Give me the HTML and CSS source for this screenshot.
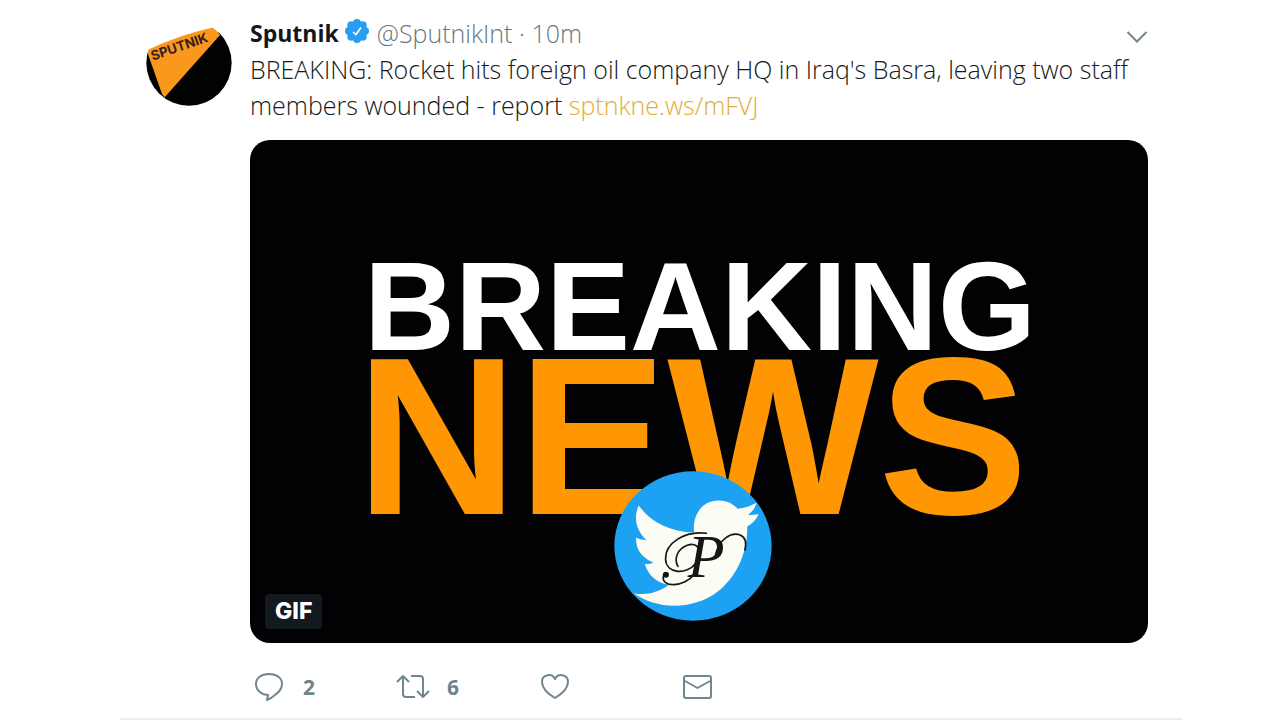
FILE: index.html
```html
<!DOCTYPE html>
<html lang="en">
<head>
<meta charset="utf-8">
<title>Sputnik on Twitter</title>
<link rel="stylesheet" href="styles.css">
</head>
<body>
<main class="page">
<article class="tweet">
  <svg class="avatar" viewBox="0 0 258 258" role="img" aria-label="Sputnik avatar">
    <defs><clipPath id="disc"><circle cx="129" cy="129" r="128"/></clipPath></defs>
    <g clip-path="url(#disc)">
      <path d="M0 95 L0 258 H258 V30 L222 36 Z" fill="#020203"/>
      <path d="M2 91 Q100 45 204 22 L222 45 L56 232 L48 222 Z" fill="#f9981d"/>
    </g>
    <text class="avatar-name" x="20" y="122" transform="rotate(-19 20 122)">SPUTNIK</text>
  </svg>
  <div class="content">
    <header class="head">
      <strong class="name">Sputnik</strong>
      <svg class="verified" viewBox="0 0 24 24" role="img" aria-label="Verified">
        <g fill="#2a9df0"><circle cx="12" cy="12" r="9"/><circle cx="12" cy="4" r="4"/><circle cx="17.700" cy="6.300" r="4"/><circle cx="20" cy="12" r="4"/><circle cx="17.700" cy="17.700" r="4"/><circle cx="12" cy="20" r="4"/><circle cx="6.300" cy="17.700" r="4"/><circle cx="4" cy="12" r="4"/><circle cx="6.300" cy="6.300" r="4"/></g>
        <path d="M8 13 L11 15.500 L16 8.500" fill="none" stroke="#fff" stroke-width="1.600"/>
      </svg>
      <span class="meta">@SputnikInt · 10m</span>
      <button class="more" aria-label="More"><svg viewBox="0 0 22 14"><path d="M1.500 2 L11 11.500 L20.500 2"/></svg></button>
    </header>
    <p class="text">BREAKING: Rocket hits foreign oil company HQ in Iraq's Basra, leaving two staff members wounded - report <a href="#">sptnkne.ws/mFVJ</a></p>
    <section class="media">
      <div class="breaking">BREAKING</div>
      <div class="news">NEWS</div>
      <svg class="logo" viewBox="42 36 472 448" role="img" aria-label="Bird logo">
        <ellipse cx="278" cy="260" rx="235" ry="223" fill="#1da1f2"/>
        <path fill="#fbfdf4" d="M116 139 C150 188 207 217 281 220 C276 165 306 124 354 124 C378 124 397 132 411 149 C432 147 452 140 468 131 C464 147 454 158 442 168 L474 165 C466 182 455 193 440 202 C442 294 393 387 305 423 C230 452 154 438 102 402 C142 408 176 398 207 376 C173 372 143 348 134 313 Q146 316 160 309 C125 296 106 269 108 235 Q122 242 139 242 C109 216 99 175 116 139Z"/>
        <text class="logo-letter" x="262" y="352">P</text>
        <g class="swash">
          <path d="M190 348 C180 387 254 383 281 345"/>
          <path d="M318 222 C254 213 194 252 196 299 C198 345 260 346 285 313 C313 278 292 246 261 258 C234 268 219 296 233 321"/>
          <path d="M345 287 C356 239 391 218 419 227 C436 234 438 251 433 272"/>
        </g>
        <circle cx="197" cy="346" r="9" fill="#111"/>
      </svg>
      <span class="gif">GIF</span>
    </section>
    <footer class="actions">
      <button class="action"><svg class="icon" viewBox="0 0 32 30"><path d="M15 23 C7 23 2 18 2 12 C2 6 7 2 15 2 C23 2 28 6 28 12 C28 19 22 22 17 26 L13 28 L14 23"/></svg><span>2</span></button>
      <button class="action"><svg class="icon wide" viewBox="0 0 34 30"><path d="M1 10 L7 4 L13 10 M7 5 V22 Q7 25 10 25 H19 M15 4 H24 Q27 4 27 7 V24 M21 19 L27 25 L33 19"/></svg><span>6</span></button>
      <button class="action" aria-label="Like"><svg class="icon" viewBox="0 0 32 30"><path d="M17 26 C12 23 4 17 4 10 C4 2 14 1 17 7 C20 1 30 2 30 10 C30 17 22 23 17 26Z"/></svg></button>
      <button class="action" aria-label="Message"><svg class="icon" viewBox="0 0 32 30"><rect x="4" y="4" width="27" height="22" rx="2"/><path d="M5 9 L17.500 16 L30 9"/></svg></button>
    </footer>
  </div>
</article>
</main>
</body>
</html>
```
FILE: styles.css
```css
* { box-sizing: border-box; }
body { margin: 0; background: #fff; color: #14191c; font-family: "Open Sans", "Noto Sans", sans-serif; }
.page { padding: 0 98px 0 120px; }
.tweet { display: flex; gap: 18px; padding: 15px 34px 0 26px; border-bottom: 2px solid #e9edf0; }
.avatar { flex: none; width: 86px; height: 86px; margin-top: 5px; }
.avatar-name { font: 700 40px "Inter", sans-serif; fill: #3a1d1d; }
.content { flex: 1; min-width: 0; }
.head { display: flex; align-items: center; height: 36px; line-height: 36px; }
.name { color: #14171a; font-size: 23px; font-weight: 700; }
.verified { width: 24px; height: 24px; margin: 0 8px 4px 6px; }
.meta { color: #66787f; font-size: 25px; font-weight: 300; }
button { margin: 0; padding: 0; border: 0; background: none; color: inherit; font: inherit; cursor: pointer; }
.more { margin-left: auto; display: flex; padding-top: 8px; }
.more svg { width: 22px; height: 14px; fill: none; stroke: #71868b; stroke-width: 2; }
.text { margin: 0 0 17px; font-size: 25px; line-height: 36px; font-weight: 300; }
.text a { color: #e0ae35; text-decoration: none; }
.media { position: relative; aspect-ratio: 898 / 503; padding-top: 118px; border-radius: 20px; background: #020204; overflow: hidden; font-family: "Liberation Sans", sans-serif; font-weight: 700; white-space: nowrap; }
.breaking { padding-left: 114px; color: #fff; font-size: 126px; line-height: 98px; }
.news { padding-left: 106px; color: #ff9604; font-size: 224px; line-height: 161px; }
.logo { position: absolute; left: 364px; bottom: 22px; width: 158px; height: 150px; }
.logo-letter { font: italic 180px "Liberation Serif", serif; fill: #161616; }
.swash { fill: none; stroke: #161616; stroke-width: 5; stroke-linecap: round; }
.gif { position: absolute; left: 15px; bottom: 14px; padding: 0 10px; border-radius: 4px; background: #14191d; color: #fff; font-family: "Inter", sans-serif; font-size: 23px; font-weight: 800; line-height: 35px; }
.actions { display: flex; height: 75px; padding: 12px 0 0 4px; align-items: center; }
.action { display: flex; align-items: center; gap: 17px; width: 142px; height: 36px; color: #71838b; font-size: 21px; font-weight: 700; }
.icon { width: 32px; height: 30px; fill: none; stroke: #71868f; stroke-width: 2; stroke-linejoin: round; }
.wide { width: 34px; }
```
